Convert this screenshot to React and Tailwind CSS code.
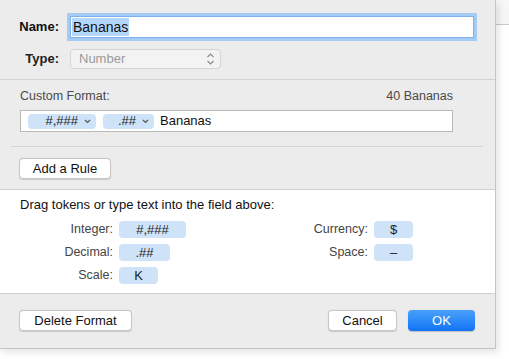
import React from "react";

const Chevron = () => (
  <svg width="7" height="5" viewBox="0 0 7 5" className="ml-[6px]">
    <path d="M1 1l2.5 2.5L6 1" fill="none" stroke="#555" strokeWidth="1.2" />
  </svg>
);

const UpDown = () => (
  <svg width="9" height="14" viewBox="0 0 9 14">
    <path d="M1.5 5l3-3 3 3M1.5 9l3 3 3-3" fill="none" stroke="#8a8a8a" strokeWidth="1.2" />
  </svg>
);

const Token = ({ children, w }) => (
  <div className={`h-[17px] ${w} rounded-[4px] bg-[#cfe3f8] flex items-center justify-center text-[13px] leading-[15px] text-[#222]`}>
    {children}
  </div>
);

const Btn = ({ children, w }) => (
  <button className={`h-[21px] ${w} rounded-[4px] bg-white border border-[#c6c6c6] shadow-[0_0.5px_1px_rgba(0,0,0,0.15)] text-[13px] text-[#111] flex items-center justify-center`}>
    {children}
  </button>
);

const Row = ({ label, lw, children }) => (
  <div className="h-[17px] flex items-center">
    <span className={`${lw} text-right text-[12.5px] leading-[15px] text-[#444]`}>{label}</span>
    <div className="ml-[6px]">{children}</div>
  </div>
);

export default function App() {
  return (
    <div
      className="w-[509px] h-[359px] bg-white flex overflow-hidden"
      style={{ fontFamily: '"Liberation Sans", Arial, sans-serif' }}
    >
      {/* Dialog */}
      <div className="w-[496px] h-[349px] bg-[#ececec] border-r border-b border-[#c4c4c4] shadow-[2px_3px_8px_rgba(0,0,0,0.12)] flex flex-col shrink-0 z-10">
        {/* Name / Type */}
        <div className="h-[80px] border-b border-[#d2d2d2] pt-[16px] flex flex-col gap-[11px]">
          <div className="flex items-center">
            <div className="w-[59px] text-right text-[13px] font-bold text-[#111]">Name:</div>
            <div className="ml-[11px] w-[404px] h-[22px] bg-white border border-[#7eb1ea] ring-[3px] ring-[#a4cbf3] flex items-center pl-[1px]">
              <span className="bg-[#b3d7fe] text-[14px] text-[#111] leading-[18px] px-[1px]">Bananas</span>
            </div>
          </div>
          <div className="flex items-center">
            <div className="w-[59px] text-right text-[13px] font-bold text-[#222]">Type:</div>
            <div className="ml-[11px] w-[151px] h-[20px] bg-[#f3f3f3] border border-[#d4d4d4] rounded-[4px] flex items-center justify-between pl-[8px] pr-[5px]">
              <span className="text-[13px] text-[#9a9a9a]">Number</span>
              <UpDown />
            </div>
          </div>
        </div>

        {/* Custom format */}
        <div className="h-[110px] border-b border-[#d0d0d0] flex flex-col">
          <div className="pl-[20px] pr-[42px] pt-[9px] flex justify-between text-[12.5px] leading-[15px] text-[#4a4a4a]">
            <span>Custom Format:</span>
            <span>40 Bananas</span>
          </div>
          <div className="mt-[6px] ml-[20px] w-[433px] h-[22px] bg-white border border-[#b9b9b9] flex items-center pl-[7px] gap-[7px]">
            <div className="h-[15px] w-[68px] rounded-[4px] bg-[#cfe3f8] flex items-center justify-end pr-[5px] text-[13px] text-[#222]">
              #,###
              <Chevron />
            </div>
            <div className="h-[15px] w-[51px] rounded-[4px] bg-[#cfe3f8] flex items-center justify-end pr-[5px] text-[13px] text-[#222]">
              .##
              <Chevron />
            </div>
            <span className="ml-[-1px] text-[13px] text-[#111]">Bananas</span>
          </div>
          <div className="mt-[14px] mx-[11px] w-[472px] border-t border-[#d6d6d6]" />
          <div className="mt-[11px] ml-[19px]">
            <Btn w="w-[92px]">Add a Rule</Btn>
          </div>
        </div>

        {/* Tokens palette */}
        <div className="h-[104px] bg-white border-b border-[#d0d0d0] flex flex-col">
          <div className="pl-[20px] pt-[7px] text-[13px] leading-[15px] text-[#111]">
            Drag tokens or type text into the field above:
          </div>
          <div className="mt-[9px] flex">
            <div className="w-[186px] flex flex-col gap-[6px]">
              <Row label="Integer:" lw="w-[113px]"><Token w="w-[67px]">#,###</Token></Row>
              <Row label="Decimal:" lw="w-[113px]"><Token w="w-[51px]">.##</Token></Row>
              <Row label="Scale:" lw="w-[113px]"><Token w="w-[39px]">K</Token></Row>
            </div>
            <div className="ml-[113px] flex flex-col gap-[6px]">
              <Row label="Currency:" lw="w-[69px]"><Token w="w-[39px]">$</Token></Row>
              <Row label="Space:" lw="w-[69px]"><Token w="w-[39px]">–</Token></Row>
            </div>
          </div>
        </div>

        {/* Buttons */}
        <div className="flex-1 flex items-start pt-[16px] pl-[19px] pr-[20px]">
          <Btn w="w-[113px]">Delete Format</Btn>
          <div className="ml-auto flex gap-[11px]">
            <Btn w="w-[69px]">Cancel</Btn>
            <button className="h-[21px] w-[67px] rounded-[4px] bg-gradient-to-b from-[#48a0fa] to-[#0f74f5] text-[13px] text-white flex items-center justify-center shadow-[0_0.5px_1px_rgba(0,0,0,0.2)]">
              OK
            </button>
          </div>
        </div>
      </div>

      {/* window behind */}
      <div className="flex-1 flex flex-col">
        <div className="h-[24px] bg-[#f6f6f6]" />
        <div className="border-t border-[#c8c8c8]" />
      </div>
    </div>
  );
}
